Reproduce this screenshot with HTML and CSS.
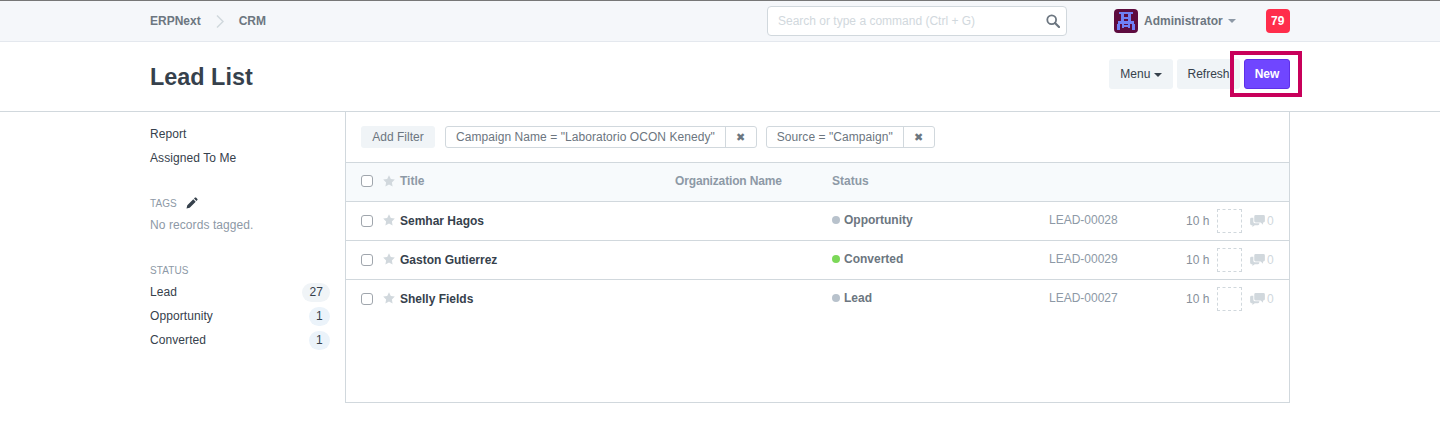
FILE: index.html
```html
<!DOCTYPE html>
<html lang="en">

<head>
  <meta charset="UTF-8">
  <meta name="viewport" content="width=device-width, initial-scale=1.0">
  <title>Lead List</title>
  <link rel="stylesheet" href="styles.css">
</head>

<body>
  <div class="navbar">
    <div class="wrap nav-inner">
      <div class="crumbs">
        <span>ERPNext</span>
        <svg class="crumb-sep" width="8" height="13" viewBox="0 0 8 13"><path d="M1 .5l6 6-6 6" fill="none" stroke="#d1d8dd" stroke-width="1.5"/></svg>
        <span>CRM</span>
      </div>
      <div class="search">
        <span class="search-text">Search or type a command (Ctrl + G)</span>
        <svg width="14" height="14" viewBox="0 0 14 14"><circle cx="5.7" cy="5.7" r="4.4" fill="none" stroke="#6c7680" stroke-width="1.8"/><path d="M9 9l4 4" stroke="#6c7680" stroke-width="2.2" stroke-linecap="round"/></svg>
      </div>
      <div class="avatar">
        <svg width="24" height="24" viewBox="0 0 24 24" shape-rendering="crispEdges">
          <rect width="24" height="24" fill="#5e0b3f"/>
          <path d="M5 3h14v2H5zM7 5h3v7H7zM14 5h3v7h-3zM10 8h4v2h-4zM4 12h16v3H4zM3 15h3v6H3zM18 15h3v6h-3zM8 15h2v4H8zM14 15h2v4h-2zM10 16h4v2h-4z" fill="#6f7ff5"/>
        </svg>
      </div>
      <span class="user">Administrator</span>
      <span class="caret caret-light"></span>
      <span class="notif">79</span>
    </div>
  </div>

  <div class="page-head">
    <div class="wrap head-inner">
      <h1>Lead List</h1>
      <div class="actions">
        <button class="btn btn-menu">Menu <span class="caret"></span></button>
        <button class="btn btn-refresh">Refresh</button>
        <button class="btn btn-new">New</button>
        <span class="highlight"></span>
      </div>
    </div>
  </div>

  <div class="wrap main">
    <div class="sidebar">
      <ul class="links">
        <li>Report</li>
        <li>Assigned To Me</li>
      </ul>

      <div class="side-title side-tags">TAGS
        <svg width="12" height="12" viewBox="0 0 12 12"><path d="M0.5 11.500l0.800-3.200 6-6 2.400 2.400-6 6zM8 1.600l1-1c.3-.3.7-.3 1 0l1.400 1.400c.3.3.3.7 0 1l-1 1z" fill="#36414c"/></svg>
      </div>
      <div class="no-tags">No records tagged.</div>

      <div class="side-title side-status">STATUS</div>
      <ul class="stats">
        <li>Lead <span class="count">27</span></li>
        <li>Opportunity <span class="count count-blue">1</span></li>
        <li>Converted <span class="count count-blue">1</span></li>
      </ul>
    </div>

    <div class="list">
      <div class="filters">
        <button class="add-filter">Add Filter</button>
        <div class="tag"><span class="tag-text">Campaign Name = "Laboratorio OCON Kenedy"</span><span class="tag-x">✖</span></div>
        <div class="tag"><span class="tag-text">Source = "Campaign"</span><span class="tag-x">✖</span></div>
      </div>

      <div class="row row-head">
        <span class="check"></span>
        <svg class="star" viewBox="0 0 12 12"><path d="M6 .3l1.800 3.700 4 .6-2.900 2.800.7 4L6 9.500l-3.600 1.900.7-4L.2 4.600l4-.6z"/></svg>
        <span class="col-title">Title</span>
        <span class="col-org">Organization Name</span>
        <span class="col-status">Status</span>
      </div>

      <div class="row">
        <span class="check"></span>
        <svg class="star" viewBox="0 0 12 12"><path d="M6 .3l1.800 3.700 4 .6-2.900 2.800.7 4L6 9.500l-3.600 1.900.7-4L.2 4.600l4-.6z"/></svg>
        <span class="col-title name">Semhar Hagos</span>
        <span class="col-org"></span>
        <span class="col-status state"><i class="dot"></i>Opportunity</span>
        <span class="lead-id">LEAD-00028</span>
        <span class="age">10 h</span>
        <span class="assign"></span>
        <svg class="comment" viewBox="0 0 16 13"><path d="M6 0h8.500a1.500 1.500 0 0 1 1.500 1.500v5a1.500 1.500 0 0 1-1.500 1.500H14v2.500L11.500 8H6a1.500 1.500 0 0 1-1.500-1.500v-5A1.500 1.500 0 0 1 6 0zM3.500 3v4a2 2 0 0 0 2 2H10v.5A1.500 1.500 0 0 1 8.500 11H5l-2.500 2v-2h-1A1.500 1.500 0 0 1 0 9.500v-5A1.500 1.500 0 0 1 1.500 3z"/></svg>
        <span class="zero">0</span>
      </div>

      <div class="row">
        <span class="check"></span>
        <svg class="star" viewBox="0 0 12 12"><path d="M6 .3l1.800 3.700 4 .6-2.900 2.800.7 4L6 9.500l-3.600 1.900.7-4L.2 4.600l4-.6z"/></svg>
        <span class="col-title name">Gaston Gutierrez</span>
        <span class="col-org"></span>
        <span class="col-status state"><i class="dot dot-green"></i>Converted</span>
        <span class="lead-id">LEAD-00029</span>
        <span class="age">10 h</span>
        <span class="assign"></span>
        <svg class="comment" viewBox="0 0 16 13"><path d="M6 0h8.500a1.500 1.500 0 0 1 1.500 1.500v5a1.500 1.500 0 0 1-1.500 1.500H14v2.500L11.500 8H6a1.500 1.500 0 0 1-1.500-1.500v-5A1.500 1.500 0 0 1 6 0zM3.500 3v4a2 2 0 0 0 2 2H10v.5A1.500 1.500 0 0 1 8.500 11H5l-2.500 2v-2h-1A1.500 1.500 0 0 1 0 9.500v-5A1.500 1.500 0 0 1 1.500 3z"/></svg>
        <span class="zero">0</span>
      </div>

      <div class="row">
        <span class="check"></span>
        <svg class="star" viewBox="0 0 12 12"><path d="M6 .3l1.800 3.700 4 .6-2.900 2.800.7 4L6 9.500l-3.600 1.900.7-4L.2 4.600l4-.6z"/></svg>
        <span class="col-title name">Shelly Fields</span>
        <span class="col-org"></span>
        <span class="col-status state"><i class="dot"></i>Lead</span>
        <span class="lead-id">LEAD-00027</span>
        <span class="age">10 h</span>
        <span class="assign"></span>
        <svg class="comment" viewBox="0 0 16 13"><path d="M6 0h8.500a1.500 1.500 0 0 1 1.500 1.500v5a1.500 1.500 0 0 1-1.500 1.500H14v2.500L11.500 8H6a1.500 1.500 0 0 1-1.500-1.500v-5A1.500 1.500 0 0 1 6 0zM3.500 3v4a2 2 0 0 0 2 2H10v.5A1.500 1.500 0 0 1 8.500 11H5l-2.500 2v-2h-1A1.500 1.500 0 0 1 0 9.500v-5A1.500 1.500 0 0 1 1.500 3z"/></svg>
        <span class="zero">0</span>
      </div>
    </div>
  </div>
</body>

</html>
```

FILE: styles.css
```css
* {
  margin: 0;
  padding: 0;
  box-sizing: border-box;
}

body {
  font-family: "Liberation Sans", Arial, sans-serif;
  font-size: 12px;
  color: #36414c;
  background: #fff;
}

ul {
  list-style: none;
}

.wrap {
  width: 1140px;
  margin: 0 auto;
}

/* top bar */
.navbar {
  height: 42px;
  background: #f5f7fa;
  border-top: 1px solid #777;
  border-bottom: 1px solid #e4e8ee;
}

.nav-inner {
  display: flex;
  align-items: center;
  height: 40px;
}

.crumbs {
  display: flex;
  align-items: center;
  width: 617px;
  font-weight: bold;
  color: #6c7680;
}

.crumb-sep {
  margin: 0 15px;
}

.search {
  display: flex;
  align-items: center;
  justify-content: space-between;
  width: 300px;
  height: 30px;
  padding: 0 6px 0 10px;
  background: #fff;
  border: 1px solid #d1d8dd;
  border-radius: 4px;
}

.search-text {
  color: #d1d8dd;
}

.avatar {
  width: 24px;
  height: 24px;
  margin-left: 47px;
  border-radius: 4px;
  overflow: hidden;
}

.user {
  margin-left: 6px;
  font-weight: bold;
  color: #6c7680;
}

.caret {
  display: inline-block;
  width: 0;
  height: 0;
  border-left: 4px solid transparent;
  border-right: 4px solid transparent;
  border-top: 4px solid #36414c;
  vertical-align: middle;
}

.caret-light {
  margin-left: 5px;
  border-top-color: #8d99a6;
}

.notif {
  width: 24px;
  height: 24px;
  margin-left: 30px;
  border-radius: 4px;
  background: #ff2d4b;
  color: #fff;
  font-weight: bold;
  line-height: 24px;
  text-align: center;
}

/* page head */
.page-head {
  height: 70px;
  border-bottom: 1px solid #d1d8dd;
}

.head-inner {
  display: flex;
  align-items: center;
  justify-content: space-between;
  height: 69px;
}

h1 {
  font-size: 23.4px;
  font-weight: bold;
  line-height: 30px;
  margin-top: 1px;
  color: #36414c;
}

.actions {
  display: flex;
  gap: 4px;
  position: relative;
  align-self: flex-start;
  margin-top: 17px;
}

.btn {
  height: 30px;
  font: inherit;
  color: #36414c;
  background: #f0f4f7;
  border: none;
  border-radius: 3px;
}

.btn-menu {
  width: 64px;
}

.btn-refresh {
  width: 63px;
}

.btn-new {
  width: 46px;
  color: #fff;
  font-weight: bold;
  background: #7046ff;
  border: 1px solid #5f2fe8;
}

.highlight {
  position: absolute;
  top: -8px;
  right: -12px;
  width: 72px;
  height: 46px;
  border: 4px solid #c8005a;
}

/* sidebar + list */
.main {
  display: flex;
}

.sidebar {
  width: 195px;
  padding-top: 10px;
  letter-spacing: 0.08px;
}

.links li {
  height: 24px;
  line-height: 24px;
}

.side-title {
  font-size: 10px;
  color: #8d99a6;
}

.side-tags {
  display: flex;
  align-items: center;
  gap: 9px;
  margin-top: 27px;
  height: 12px;
}

.no-tags {
  margin-top: 8px;
  line-height: 16px;
  color: #8d99a6;
}

.side-status {
  margin-top: 32px;
  height: 12px;
  line-height: 12px;
}

.stats {
  margin-top: 3px;
}

.stats li {
  display: flex;
  align-items: center;
  justify-content: space-between;
  height: 24px;
  padding-right: 15px;
}

.count {
  min-width: 21px;
  height: 19px;
  padding: 0 7px;
  border-radius: 10px;
  background: #f0f4f7;
  line-height: 19px;
  text-align: center;
}

.count-blue {
  padding: 0;
  background: #ebf3fa;
}

.list {
  width: 945px;
  height: 291px;
  border: 1px solid #d1d8dd;
  border-top: none;
}

.filters {
  display: flex;
  align-items: center;
  height: 51px;
  padding-left: 15px;
  border-bottom: 1px solid #d1d8dd;
}

.add-filter {
  width: 74px;
  height: 22px;
  margin-right: 10px;
  font: inherit;
  color: #6c7680;
  background: #f0f4f7;
  border: none;
  border-radius: 3px;
}

.tag {
  display: flex;
  height: 22px;
  margin-right: 9px;
  line-height: 20px;
  color: #6c7680;
  border: 1px solid #d1d8dd;
  border-radius: 3px;
}

.tag-text {
  padding: 0 10px;
  letter-spacing: 0.06px;
  border-right: 1px solid #d1d8dd;
}

.tag-x {
  width: 30px;
  font-size: 11px;
  text-align: center;
  color: #6c7680;
}

.row {
  display: flex;
  align-items: center;
  height: 39px;
  padding-left: 15px;
  border-bottom: 1px solid #d1d8dd;
}

.row:last-child {
  border-bottom-color: transparent;
}

.row-head {
  background: #f7fafc;
  font-weight: bold;
  color: #8d99a6;
}

.row-head > * {
  margin-top: -2px;
}

.row-head .col-org {
  letter-spacing: -0.15px;
}

.check {
  width: 12px;
  height: 12px;
  background: #fff;
  border: 1px solid #a0a6ad;
  border-radius: 3px;
}

.star {
  width: 12px;
  height: 12px;
  margin-left: 10px;
  margin-top: -2px;
  fill: #d1d8dd;
}

.col-title {
  width: 275px;
  margin-left: 5px;
}

.name {
  font-weight: bold;
}

.col-org {
  width: 157px;
}

.col-status {
  width: 217px;
}

.state {
  font-weight: bold;
  color: #6c7680;
  margin-top: -2px;
}

.dot {
  display: inline-block;
  width: 8px;
  height: 8px;
  margin-right: 4px;
  border-radius: 50%;
  background: #b8c2cc;
}

.dot-green {
  background: #7cd858;
}

.lead-id {
  width: 137px;
  color: #8d99a6;
  margin-top: -3px;
}

.age {
  width: 31px;
  color: #87909a;
}

.assign {
  width: 25px;
  height: 24px;
  border: 1px dashed #d1d8dd;
}

.comment {
  width: 15px;
  height: 12px;
  margin-left: 8px;
  fill: #d1d8dd;
}

.zero {
  margin-left: 2px;
  color: #d1d8dd;
}
```
